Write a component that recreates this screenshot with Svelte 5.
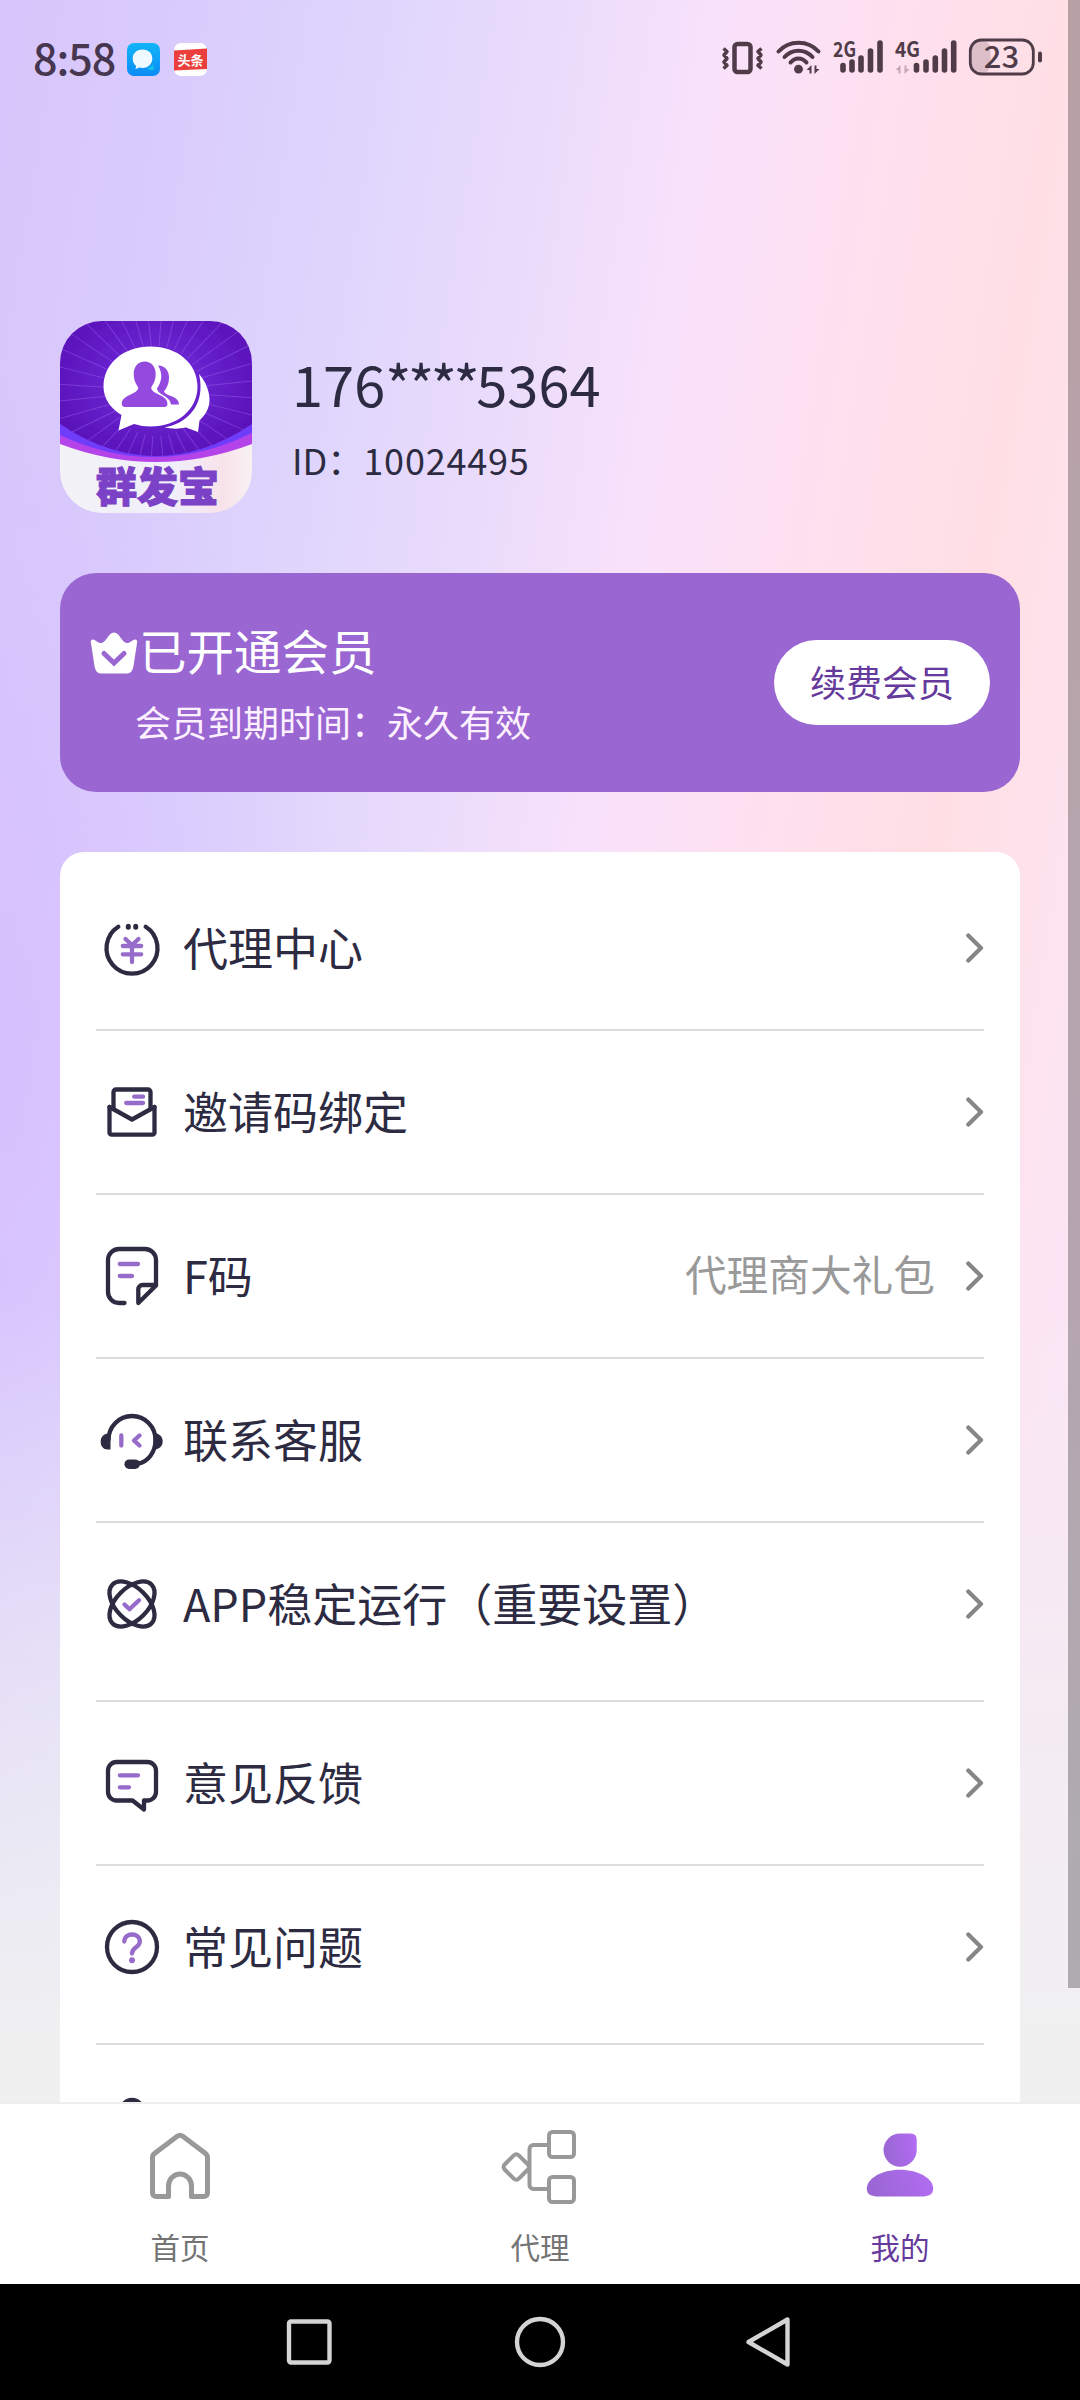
<script>
  const menu = [
    { id: 'agent', label: '代理中心' },
    { id: 'invite', label: '邀请码绑定' },
    { id: 'fcode', label: 'F码', value: '代理商大礼包' },
    { id: 'service', label: '联系客服' },
    { id: 'stable', label: 'APP稳定运行（重要设置）', tall: true },
    { id: 'feedback', label: '意见反馈' },
    { id: 'faq', label: '常见问题', tall: true },
    { id: 'account', label: '' },
  ]

  const tabs = [
    { id: 'home', label: '首页' },
    { id: 'agent', label: '代理' },
    { id: 'mine', label: '我的' },
  ]

  let activeTab = $state('mine')

  const rays = Array.from({ length: 36 }, (_, i) => i * 10 + 4)
</script>

{#snippet menuIcon(id)}
  <svg class="menu-icon" viewBox="0 0 72 72">
    {#if id === 'agent'}
      <path d="M22.3 14.7A25.5 25.5 0 1 0 49.7 14.7" />
      <path d="M32.3 14.2v1M39.7 14.2v1" stroke-width="5" />
      <path class="accent" d="M29.5 27l6.5 6 6.5-6M26.8 34h18.4M26.8 42.3h18.4M36 34v16" />
    {:else if id === 'invite'}
      <path d="M13.5 31V56.5a2.2 2.2 0 0 0 2.2 2.2H56.3a2.2 2.2 0 0 0 2.2-2.2V31" />
      <path d="M13.5 31L36 43.5 58.5 31" />
      <path d="M17.5 33V16a2.5 2.5 0 0 1 2.5-2.5H52a2.5 2.5 0 0 1 2.5 2.5V33" />
      <path class="accent" d="M38.2 20.7H47M30.2 27H47" />
    {:else if id === 'fcode'}
      <path d="M28.5 63H23a11 11 0 0 1-11-11V20A11 11 0 0 1 23 9H49a11 11 0 0 1 11 11V45H46.5a4.2 4.2 0 0 0-4.2 4.2V63L60 45.5" />
      <path class="accent" d="M23.8 24H42M23.8 36H36" />
    {:else if id === 'service'}
      <path d="M12.5 36A23.5 24 0 0 1 59.5 36C59.5 48 52 58 42 59.5" />
      <path class="solid" d="M14.5 29v16.5h-3c-4 0-6.8-3-6.8-7.700s2.800-7.500 6.300-8zM57.500 29c4 0 9.200 2.500 9.200 8.300 0 5.500-4 8.200-9.200 8.200z" />
      <path d="M33.2 60.2h6" stroke-width="9.5" />
      <path class="accent" d="M25.3 31.500v10M43.500 31.500l-5.500 5 5.500 5" />
    {:else if id === 'stable'}
      <ellipse cx="36" cy="36" rx="27.5" ry="16" transform="rotate(45 36 36)" />
      <ellipse cx="36" cy="36" rx="27.5" ry="16" transform="rotate(-45 36 36)" />
      <path class="accent" d="M28.5 36.500l5 4.700 9.500-9" />
    {:else if id === 'feedback'}
      <path d="M36.5 53.500L48 62.500V53.500H51.500a8.500 8.500 0 0 0 8.500-8.500V23.500a8.500 8.500 0 0 0-8.500-8.500H20.500a8.500 8.500 0 0 0-8.500 8.500V45a8.500 8.500 0 0 0 8.500 8.500Z" />
      <path class="accent" d="M23.8 28.300H42M23.800 40.300H33" />
    {:else if id === 'faq'}
      <circle cx="36" cy="36" r="25" />
      <path class="accent" d="M28.3 30.500C28.300 21 43.800 21.300 43.800 30.500C43.800 36.500 36 36 36 42.500" />
      <circle class="dot" cx="36" cy="49.200" r="3" />
    {:else}
      <circle cx="36" cy="21" r="11" />
      <path d="M12 62c0-14 10-22 24-22s24 8 24 22z" />
    {/if}
  </svg>
{/snippet}

<div class="phone">
  <div class="scroll">
    <header class="status">
      <span class="time">8:58</span>
      <svg class="app-badge" viewBox="0 0 33 33">
        <defs>
          <linearGradient id="msg" x1="0" y1="0" x2="0" y2="1">
            <stop offset="0" stop-color="#12b4f8" />
            <stop offset="1" stop-color="#0c8cf5" />
          </linearGradient>
        </defs>
        <rect width="33" height="33" rx="7" fill="url(#msg)" />
        <path d="M20 25c3 0 5-2 6-4l1 6h-4z" fill="#13c0ea" />
        <path d="M15.500 6.500C9.500 6.500 5.700 10.500 5.700 15.500c0 3.500 1.500 6 3.500 7.500l-.8 3.300 3.800-1.700c1 .3 2.200.4 3.300.4 6 0 9.800-4.300 9.800-9.500s-3.800-9-9.800-9z" fill="#eefaff" />
      </svg>
      <svg class="app-badge second" viewBox="0 0 33 33">
        <rect width="33" height="33" rx="7" fill="#fff" />
        <path d="M0 7.500L33 5.500V26L0 27.500z" fill="#ea3f3c" />
        <text x="16.500" y="21.500" text-anchor="middle">头条</text>
      </svg>

      <svg class="signals" viewBox="0 0 320 40">
        <rect x="12.500" y="5" width="16" height="28" rx="3" fill="none" stroke-width="4.500" />
        <path d="M1.500 9.500l3.500 3-3 3.500 3 3.500-3 3.500 3 3.500-3.500 3M39.500 9.500l-3.500 3 3 3.500-3 3.500 3 3.500-3 3.500 3.500 3" fill="none" stroke-width="3.500" stroke-linejoin="round" />
        <g fill="none" stroke-width="4" stroke-linecap="round">
          <path d="M56.500 12.500C67 .7 86 .7 96.500 12.500M62.500 18C70 9.500 83 9.500 90.500 18M68.500 23.500C73 18 80 18 84.500 23.500" />
        </g>
        <circle cx="76.500" cy="30.200" r="4.400" stroke="none" />
        <path d="M84.500 31l5-5v8.500h-2V31zM97.500 30l-5 5v-8.500h2V30z" stroke="none" />
        <text x="111" y="17.500" textLength="23" lengthAdjust="spacingAndGlyphs">2G</text>
        <text x="173" y="17.500" textLength="25" lengthAdjust="spacingAndGlyphs">4G</text>
        <g fill="none" stroke-width="5.600" stroke-linecap="round">
          <path d="M121 26.500V31M130 23V31M139 19V31M148.500 12V31M158 4V31" />
          <path d="M194.500 26.500V31M204 23V31M213.300 19V31M222.500 12V31M231.700 4V31" />
        </g>
        <path d="M173.500 31l5-5v8.500h-2V31zM187.500 30l-5 5v-8.500h2V30z" stroke="none" opacity="0.35" />
        <rect x="249.500" y="2" width="19" height="32" rx="8" stroke="none" opacity="0.2" />
        <rect x="248.300" y="1" width="63" height="34" rx="11" fill="none" stroke-width="2.800" />
        <rect x="316" y="12.500" width="4" height="11" rx="2" stroke="none" />
        <text class="level" x="279.500" y="28.500" text-anchor="middle">23</text>
      </svg>
    </header>

    <section class="profile">
      <svg class="avatar" viewBox="0 0 192 192">
        <defs>
          <radialGradient id="night" cx="0.5" cy="0.4" r="0.7">
            <stop offset="0" stop-color="#7430de" />
            <stop offset="1" stop-color="#540bb0" />
          </radialGradient>
          <linearGradient id="paper" x1="0" y1="0" x2="1" y2="0">
            <stop offset="0" stop-color="#f3f2f6" />
            <stop offset="0.6" stop-color="#f0effa" />
            <stop offset="0.85" stop-color="#f8e2ea" />
            <stop offset="1" stop-color="#f7f1f4" />
          </linearGradient>
          <clipPath id="avatar-clip"><rect width="192" height="192" rx="42" /></clipPath>
        </defs>
        <g clip-path="url(#avatar-clip)">
          <rect width="192" height="145" fill="url(#night)" />
          {#each rays as angle}
            <path d="M96 25V-60" transform="rotate({angle} 96 70)" stroke="#a56cf5" stroke-width="1" opacity="0.4" />
          {/each}
          <path d="M0 103Q96 167 192 103V140H0z" fill="#6f3cfa" />
          <path d="M0 114Q96 159 192 112V145H0z" fill="#b443ea" />
          <path d="M0 123Q96 159 192 123V192H0z" fill="url(#paper)" />
          <path d="M139 53c7 8 10.500 17 10.500 26 0 8-4 15-10 20.500l-1.500 11.500-12-4.500c-7 1.500-14 1.500-21.500 0 22-4 36-20 36-40 0-5-.5-9-1.500-13.500z" fill="#fff" />
          <path d="M90.500 25.500c27 0 47 17 47 40s-20 40-47 40c-6 0-11-.8-16.500-2.500L58.500 109.500 61.500 94C50 87 43.500 77 43.500 65.500c0-23 20-40 47-40z" fill="#fff" />
          <path d="M98 44.500c7 0 11 5 11 12 0 6-2 10-5 14 2 5 15 4 15 13h-8c-1-9-13-9-14-16 5-7 6-15 1-23z" fill="#9449df" />
          <path d="M84.700 40.500c6.500 0 11 5 11 12.500 0 6.500-2.500 10-4.500 13.500 0 7 16 7 16.300 16 0 2-1 3.500-3 3.500H65c-2 0-3.300-1.500-3.300-3.500.5-9 16.500-9 16.500-16-2-3.500-4.500-7-4.500-13.500 0-7.500 4.500-12.500 11-12.500z" fill="#9449df" />
          <text x="97.500" y="181" text-anchor="middle">群发宝</text>
        </g>
      </svg>
      <div class="who">
        <div class="phone-no">176<span class="mask">****</span>5364</div>
        <div class="uid">ID：<span>10024495</span></div>
      </div>
    </section>

    <section class="vip">
      <div class="vip-info">
        <div class="vip-title">
          <svg class="crown" viewBox="0 0 48 42">
            <path d="M2.500 7.500C5 7 8 11.500 11.500 11c5-.8 7-10.500 12.500-10.500S31.500 10.200 36.500 11c3.500.5 6.500-4 9-3.500 1.500.3 1.800 1.500 1.600 3L43.500 34c-.8 5-3 7.500-7 7.500H11.500c-4 0-6.200-2.500-7-7.500L.9 10.500c-.2-1.500.1-2.700 1.600-3z" fill="#fff" />
            <path d="M14 21.500l10 9.500 10-9.500" fill="none" stroke="#9966d2" stroke-width="5" stroke-linecap="round" />
          </svg>
          <span>已开通会员</span>
        </div>
        <div class="vip-date">会员到期时间：永久有效</div>
      </div>
      <button class="renew">续费会员</button>
    </section>

    <ul class="menu">
      {#each menu as item}
        <li class:tall={item.tall}>
          {@render menuIcon(item.id)}
          <span class="label">{item.label}</span>
          {#if item.value}<span class="value">{item.value}</span>{/if}
          <svg class="chevron" viewBox="0 0 18 30"><path d="M2.300 2.500L15 15 2.300 27.500" /></svg>
        </li>
      {/each}
    </ul>
  </div>

  <nav class="tabs">
    {#each tabs as tab}
      <button class="tab" class:active={activeTab === tab.id} onclick={() => (activeTab = tab.id)}>
        <svg class="tab-icon" viewBox="0 0 80 80">
          {#if tab.id === 'home'}
            <path d="M37.200 10.300L14.500 27.500Q12.500 29 12.500 31.500V66.500Q12.500 70.500 16.500 70.500H28.500V60A11.500 12 0 0 1 51.500 60V70.500H63.500Q67.500 70.500 67.500 66.500V31.500Q67.500 29 65.500 27.500L42.800 10.300Q40 8.300 37.200 10.300Z" stroke-width="5" />
          {:else if tab.id === 'agent'}
            <g stroke-width="4">
              <rect x="49" y="6" width="25" height="25" rx="3.500" />
              <rect x="49" y="51" width="25" height="25" rx="3.500" />
              <path d="M49 19H33.500a4 4 0 0 0-4 4V59a4 4 0 0 0 4 4H49" />
              <rect x="6.300" y="31" width="20" height="20" rx="3.500" transform="rotate(45 16.300 41)" />
            </g>
          {:else}
            <defs>
              <linearGradient id="mine" x1="0" y1="0.6" x2="1" y2="0.4">
                <stop offset="0" stop-color="#9966d2" />
                <stop offset="1" stop-color="#b26cf2" />
              </linearGradient>
            </defs>
            <path class="fill" d="M40 7.500H50.500Q56.700 7.500 56.700 13.700V24A16.600 16.600 0 1 1 40 7.500Z" />
            <path class="fill" d="M40 43.800C59 43.800 73.200 53 73.200 62.500C73.200 68.500 69 70.500 61 70.500H19C11 70.500 6.800 68.500 6.800 62.500C6.800 53 21 43.800 40 43.800Z" />
          {/if}
        </svg>
        <span>{tab.label}</span>
      </button>
    {/each}
  </nav>

  <footer class="sysnav">
    <svg viewBox="0 0 54 54"><rect x="7" y="6.500" width="40.500" height="41" rx="2" /></svg>
    <svg viewBox="0 0 54 54"><circle cx="27" cy="27" r="23" /></svg>
    <svg viewBox="0 0 54 54"><path d="M43.500 4.500V49.500L4.500 27Z" /></svg>
  </footer>

  <div class="scrollbar"></div>
</div>

<style>
  :global(body) { margin: 0; background: #f0f0f0; }

  .phone {
    position: relative;
    display: flex;
    flex-direction: column;
    width: 1080px;
    height: 2400px;
    overflow: hidden;
    font-family: "Noto Sans CJK SC", "Noto Sans", sans-serif;
    line-height: 1;
    color: #2d2b42;
  }

  .scroll {
    height: 2102px;
    overflow: hidden;
    background:
      linear-gradient(to bottom, rgba(240, 240, 241, 0) 1300px, rgba(240, 240, 241, 0.5) 1660px, #f0f0f1 2050px),
      radial-gradient(ellipse 360px 700px at 0 1060px, rgba(214, 188, 255, 0.7), rgba(214, 188, 255, 0)),
      linear-gradient(99deg, #d8c5fb 0, #d9cafc 160px, #ddd4fd 340px, #e9dbfb 540px, #fae2fb 730px, #fee0ee 900px, #ffdfe4 1060px, #fde3ee 1180px, #fbe5f5 1260px);
  }

  .status {
    display: flex;
    align-items: center;
    box-sizing: border-box;
    height: 118px;
    padding: 0 38px 0 33px;
    color: #46364f;
  }
  .time {
    width: 94px;
    font-size: 43px;
    font-weight: 500;
    letter-spacing: -1px;
    white-space: nowrap;
    padding-bottom: 5px;
  }
  .app-badge { width: 33px; height: 33px; }
  .app-badge.second { margin-left: 14px; }
  .app-badge text { font-size: 13px; font-weight: 700; fill: #fff; }
  .signals {
    width: 320px;
    height: 40px;
    margin-left: auto;
    overflow: visible;
    fill: #503c48;
    stroke: #503c48;
  }
  .signals text { font-size: 21px; font-weight: 700; stroke: none; }
  .signals .level { font-size: 31px; font-weight: 500; }

  .profile {
    display: flex;
    margin: 203px 60px 0;
    gap: 40px;
  }
  .avatar { width: 192px; height: 192px; }
  .avatar text { font-size: 41px; font-weight: 900; fill: #7b41c6; stroke: #7b41c6; stroke-width: 1; }
  .phone-no { margin-top: 34px; font-size: 56px; white-space: nowrap; }
  .mask { letter-spacing: -3.4px; }
  .uid { margin-top: 30px; font-size: 36px; }
  .uid span { letter-spacing: 0.8px; }

  .vip {
    display: flex;
    align-items: center;
    justify-content: space-between;
    box-sizing: border-box;
    height: 219px;
    margin: 60px 60px 0;
    padding: 0 30px;
    border-radius: 36px;
    background: #9966d2;
    color: #fff;
  }
  .vip-title { display: flex; align-items: center; font-size: 47.5px; }
  .vip-title span { padding-bottom: 6px; margin-left: 1px; }
  .crown { width: 48px; height: 42px; }
  .vip-date { margin: 24px 0 0 45px; font-size: 36px; color: #fdf0ff; }
  .renew {
    width: 216px;
    height: 85px;
    padding: 0 0 3px;
    border: none;
    border-radius: 43px;
    background: #fff;
    font: inherit;
    font-size: 36px;
    color: #663a9c;
  }

  .menu {
    list-style: none;
    margin: 60px 60px 0;
    padding: 15px 36px 0;
    border-radius: 24px 24px 0 0;
    background: #fff;
  }
  li {
    display: flex;
    align-items: center;
    height: 162px;
    border-bottom: 2px solid #dcdcdc;
  }
  li.tall { padding-bottom: 15px; }
  .menu-icon {
    width: 72px;
    height: 72px;
    fill: none;
    stroke: #2d2b42;
    stroke-width: 4.3;
    stroke-linecap: round;
    stroke-linejoin: round;
  }
  .menu-icon .accent { stroke: #966bc9; }
  .menu-icon .dot { fill: #966bc9; stroke: none; }
  .menu-icon .solid { fill: #2d2b42; stroke: none; }
  .label { flex: 1; margin-left: 15px; padding-bottom: 4px; font-size: 45px; }
  .value { margin-right: 31px; padding-bottom: 4px; font-size: 41.7px; color: #999; }
  .chevron {
    width: 18px;
    height: 30px;
    fill: none;
    stroke: #868686;
    stroke-width: 4.2;
    stroke-linecap: round;
    stroke-linejoin: round;
  }

  .tabs {
    display: flex;
    box-sizing: border-box;
    height: 182px;
    border-top: 2px solid #eee;
    background: #fff;
  }
  .tab {
    flex: 1;
    display: flex;
    flex-direction: column;
    align-items: center;
    padding: 22px 0 0;
    border: none;
    background: none;
    font: inherit;
    font-size: 29.5px;
    color: #747474;
  }
  .tab.active { color: #663a9c; }
  .tab span { margin-top: 26px; }
  .tab-icon { width: 80px; height: 80px; fill: none; stroke: #999; stroke-linejoin: round; }
  .tab-icon .fill { fill: url(#mine); stroke: none; }

  .sysnav {
    display: flex;
    justify-content: center;
    align-items: center;
    gap: 177px;
    height: 116px;
    background: #000;
  }
  .sysnav svg { width: 54px; height: 54px; fill: none; stroke: #d4d4d4; stroke-width: 4.4; stroke-linejoin: round; }

  .scrollbar {
    position: absolute;
    top: 0;
    right: 0;
    width: 12px;
    height: 1988px;
    background: rgba(0, 0, 0, 0.28);
  }
</style>
